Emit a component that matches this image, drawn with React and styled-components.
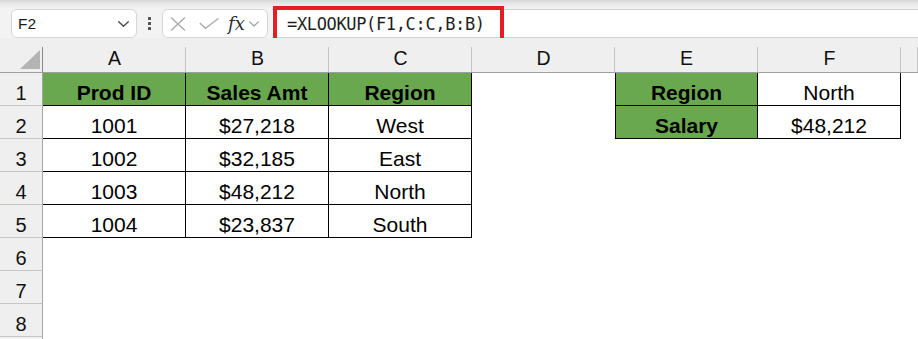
import React from 'react';
import styled, { createGlobalStyle } from 'styled-components';

const Global = createGlobalStyle`
  html, body { margin: 0; padding: 0; background: #fff; overflow: hidden; }
  body { font-family: "Liberation Sans", Arial, sans-serif; }
`;

const Page = styled.div`
  position: relative;
  width: 918px;
  height: 339px;
  overflow: hidden;
  background: #fff;
`;

const TopStrip = styled.div`
  height: 9px;
  background: linear-gradient(#d8d8d8, #ebebeb 55%, #f3f3f3);
`;

const Bar = styled.div`
  display: flex;
  align-items: stretch;
  height: 29px;
  padding-left: 11px;
  background: #f3f3f3;
`;

const NameBox = styled.div`
  box-sizing: border-box;
  width: 126px;
  display: flex;
  align-items: center;
  justify-content: space-between;
  padding: 0 7px 0 6px;
  background: #fff;
  border: 1px solid #d6d6d6;
  border-radius: 6px;
  font-size: 15.5px;
  color: #1a1a1a;
`;

const Dots = styled.div`
  width: 25px;
  display: flex;
  flex-direction: column;
  align-items: center;
  justify-content: center;
  gap: 2px;
  & > span {
    width: 3px;
    height: 3px;
    border-radius: 0.5px;
    background: #505050;
  }
`;

const FxBox = styled.div`
  box-sizing: border-box;
  width: 106px;
  display: flex;
  align-items: center;
  padding-left: 7px;
  background: #fff;
  border: 1px solid #d6d6d6;
  border-radius: 6px;
`;

const IconGap = styled.span`
  width: 13px;
`;

const Fx = styled.span`
  font-family: "DejaVu Serif", "Liberation Serif", serif;
  font-style: italic;
  font-size: 18px;
  color: #2e2e2e;
  margin-left: 9px;
  margin-right: 4px;
  line-height: 1;
`;

const FormulaField = styled.div`
  flex: 1;
  margin-left: 4px;
  display: flex;
  align-items: center;
  padding-left: 15px;
  padding-top: 1px;
  background: #fff;
  border-top: 1px solid #d2d2d2;
  border-bottom: 1px solid #d2d2d2;
  font-family: "DejaVu Sans Mono", "Liberation Mono", monospace;
  font-size: 17px;
  letter-spacing: -0.35px;
  color: #1f1f1f;
`;

const Callout = styled.div`
  position: absolute;
  left: 273px;
  top: 6px;
  width: 231px;
  height: 37px;
  box-sizing: border-box;
  border: 4px solid #e81c24;
  pointer-events: none;
`;

const Sheet = styled.div`
  display: grid;
  grid-template-columns: 43px repeat(6, 143px) 1fr;
  grid-template-rows: 35px repeat(9, 33px);
`;

const HeadBase = styled.div`
  box-sizing: border-box;
  position: relative;
  background: #efefef;
  display: flex;
  justify-content: center;
  align-items: flex-end;
  color: #111;
`;

const ColHead = styled(HeadBase)`
  border-bottom: 1px solid #9f9f9f;
  padding-bottom: 2px;
  font-size: 19.5px;
  &::after {
    content: '';
    position: absolute;
    right: 0;
    top: 9px;
    bottom: 0;
    width: 1px;
    background: ${p => (p.$corner ? '#8a8a8a' : '#c4c4c4')};
  }
`;

const Corner = styled(ColHead)`
  justify-content: flex-end;
  padding: 0 3px 3px 0;
`;

const RowHead = styled(HeadBase)`
  border-right: 1px solid #a5a5a5;
  border-bottom: 1px solid #c6c6c6;
  font-size: 20px;
`;

const Cell = styled.div`
  box-sizing: border-box;
  display: flex;
  justify-content: center;
  align-items: flex-end;
  font-size: 21px;
  color: #000;
  font-weight: ${p => (p.$bold ? 700 : 400)};
  background: ${p => (p.$fill ? '#6aa84f' : '#fff')};
  border-right: ${p => (p.$boxed ? '1px solid #000' : 'none')};
  border-bottom: ${p => (p.$boxed ? '1px solid #000' : 'none')};
  border-left: ${p => (p.$left ? '1px solid #000' : 'none')};
  white-space: nowrap;
`;

const Chevron = ({ w = 11, h = 6, color = '#444' }) => (
  <svg width={w} height={h} viewBox="0 0 11 6" fill="none">
    <path d="M0.7 0.7 L5.5 5.2 L10.3 0.7" stroke={color} strokeWidth="1.3" strokeLinecap="round" strokeLinejoin="round" />
  </svg>
);

const CrossIcon = () => (
  <svg width="16" height="14" viewBox="0 0 16 14" fill="none">
    <path d="M1 0.5 L15 13.5 M15 0.5 L1 13.5" stroke="#a9a9a9" strokeWidth="1.3" />
  </svg>
);

const CheckIcon = () => (
  <svg width="20" height="11" viewBox="0 0 20 11" fill="none">
    <path d="M0.8 5 L6.5 10.3 L19.3 0.6" stroke="#a9a9a9" strokeWidth="1.3" />
  </svg>
);

const Triangle = () => (
  <svg width="20" height="19" viewBox="0 0 20 19">
    <polygon points="0,19 20,0 20,19" fill="#b4b4b4" />
  </svg>
);

const columns = ['A', 'B', 'C', 'D', 'E', 'F', ''];

const rows = [
  { a: 'Prod ID', b: 'Sales Amt', c: 'Region', e: 'Region', f: 'North', head: true },
  { a: '1001', b: '$27,218', c: 'West', e: 'Salary', f: '$48,212' },
  { a: '1002', b: '$32,185', c: 'East' },
  { a: '1003', b: '$48,212', c: 'North' },
  { a: '1004', b: '$23,837', c: 'South' },
  {},
  {},
  {},
  { hidden: true },
];

export default function App() {
  return (
    <Page>
      <Global />
      <TopStrip />
      <Bar>
        <NameBox>
          <span>F2</span>
          <Chevron />
        </NameBox>
        <Dots>
          <span />
          <span />
          <span />
        </Dots>
        <FxBox>
          <CrossIcon />
          <IconGap />
          <CheckIcon />
          <Fx>fx</Fx>
          <Chevron w={10} h={6} color="#9a9a9a" />
        </FxBox>
        <FormulaField>=XLOOKUP(F1,C:C,B:B)</FormulaField>
      </Bar>
      <Callout />
      <Sheet>
        <Corner $corner>
          <Triangle />
        </Corner>
        {columns.map((c, i) => (
          <ColHead key={i}>{c}</ColHead>
        ))}
        {rows.map((r, i) => {
          const inTable = i < 5;
          const inLookup = i < 2;
          return (
            <React.Fragment key={i}>
              <RowHead>{r.hidden ? '' : i + 1}</RowHead>
              <Cell $boxed={inTable} $fill={r.head} $bold={r.head}>{r.a}</Cell>
              <Cell $boxed={inTable} $fill={r.head} $bold={r.head}>{r.b}</Cell>
              <Cell $boxed={inTable} $fill={r.head} $bold={r.head}>{r.c}</Cell>
              <Cell />
              <Cell $boxed={inLookup} $left={inLookup} $fill={inLookup} $bold={inLookup}>{r.e}</Cell>
              <Cell $boxed={inLookup}>{r.f}</Cell>
              <Cell />
            </React.Fragment>
          );
        })}
      </Sheet>
    </Page>
  );
}
